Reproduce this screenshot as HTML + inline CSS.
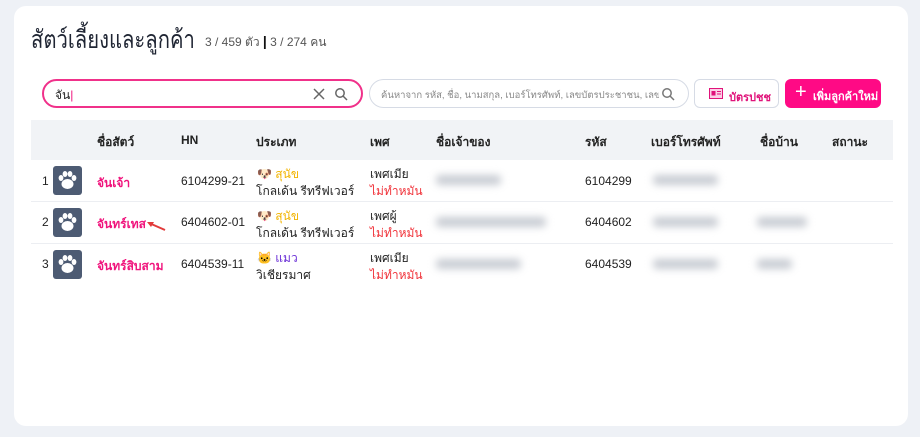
<!DOCTYPE html>
<html><head><meta charset="utf-8"><style>
*{box-sizing:border-box;margin:0;padding:0}
body{width:920px;height:437px;background:#eef1f6;font-family:"Liberation Sans","Noto Sans CJK SC",sans-serif;position:relative;overflow:hidden;color:#222}
.card{position:absolute;left:14px;top:6px;width:894px;height:420px;background:#fff;border-radius:12px}
.a{position:absolute;white-space:nowrap}
.title{left:31px;top:20px;font-size:25px;color:#1f2533;transform:scaleX(0.81);transform-origin:left top}
.sub{left:205px;top:33px;font-size:12px;color:#555}
.s1{left:42px;top:79px;width:321px;height:29px;border:2px solid #f0318a;border-radius:15px}
.s2{left:369px;top:79px;width:320px;height:29px;border:1px solid #d6dbe5;border-radius:15px;overflow:hidden}
.b1{left:694px;top:79px;width:85px;height:29px;border:1px solid #d6dbe5;border-radius:6px;color:#e0137a;font-size:11px;font-weight:bold}
.b2{left:785px;top:79px;width:96px;height:29px;background:#ff0a85;border-radius:6px;color:#fff;font-size:11px;font-weight:bold}
.th{left:31px;top:120px;width:862px;height:40px;background:#f1f3f6}
.h{top:133px;font-size:12px;font-weight:bold;color:#222}
.line{left:31px;width:862px;height:1px;background:#eceef2}
.av{left:53px;width:29px;height:29px;background:#4d5b73;border-radius:3px}
.t{font-size:12px}
.pink{color:#f0137c;font-weight:bold}
.red{color:#f0333a}
.blur{background:#c8ccd3;filter:blur(4px);height:10px;border-radius:4px}
</style></head><body>
<div class="card"></div>
<div class="a title">สัตว์เลี้ยงและลูกค้า</div>
<div class="a sub">3 / 459 ตัว <b style="color:#111;font-size:14px">|</b> 3 / 274 คน</div>
<div class="a s1"><span class="a t" style="left:11px;top:5px">จัน<span style="color:#f0137c">|</span></span>
<svg class="a" style="left:268px;top:6px" width="14" height="14" viewBox="0 0 14 14"><path d="M2 2L12 12M12 2L2 12" stroke="#666" stroke-width="1.5"/></svg>
<svg class="a" style="left:290px;top:6px" width="14" height="14" viewBox="0 0 14 14"><circle cx="6" cy="6" r="4.2" fill="none" stroke="#666" stroke-width="1.5"/><path d="M9 9L13 13" stroke="#666" stroke-width="1.5"/></svg></div>
<div class="a s2"><span class="a" style="left:11px;top:8px;font-size:9.5px;color:#888;width:278px;overflow:hidden">ค้นหาจาก รหัส, ชื่อ, นามสกุล, เบอร์โทรศัพท์, เลขบัตรประชาชน, เลข</span>
<svg class="a" style="left:291px;top:7px" width="14" height="14" viewBox="0 0 14 14"><circle cx="6" cy="6" r="4.2" fill="none" stroke="#777" stroke-width="1.5"/><path d="M9 9L13 13" stroke="#777" stroke-width="1.5"/></svg></div>
<div class="a b1"><svg class="a" style="left:14px;top:8px" width="14" height="11" viewBox="0 0 14 11"><rect x="0.5" y="0.5" width="13" height="10" fill="#fbd0e6" stroke="#e0137a"/><rect x="2.5" y="3" width="4" height="4.5" fill="#e0137a"/><path d="M8 3.5h4M8 6h4" stroke="#e0137a"/></svg><span class="a" style="left:34px;top:8px">บัตรปชช</span></div>
<div class="a b2"><span class="a" style="left:10px;top:2px;font-size:20px;font-weight:normal">+</span><span class="a" style="left:28px;top:8px">เพิ่มลูกค้าใหม่</span></div>
<div class="a th"></div>
<div class="a h" style="left:97px">ชื่อสัตว์</div><div class="a h" style="left:181px">HN</div><div class="a h" style="left:256px">ประเภท</div><div class="a h" style="left:370px">เพศ</div><div class="a h" style="left:436px">ชื่อเจ้าของ</div><div class="a h" style="left:585px">รหัส</div><div class="a h" style="left:651px">เบอร์โทรศัพท์</div><div class="a h" style="left:760px">ชื่อบ้าน</div><div class="a h" style="left:832px">สถานะ</div>
<div class="a line" style="top:201px"></div><div class="a line" style="top:243px"></div>

<div class="a t" style="left:42px;top:174px">1</div><div class="a av" style="top:166px"></div>
<div class="a t pink" style="left:97px;top:174px">จันเจ้า</div><div class="a t" style="left:181px;top:174px">6104299-21</div>
<div class="a t" style="left:257px;top:165px"><span>🐶</span> <span style="color:#f2b400">สุนัข</span></div><div class="a t" style="left:256px;top:182px">โกลเด้น รีทรีฟเวอร์</div>
<div class="a t" style="left:370px;top:165px">เพศเมีย</div><div class="a t red" style="left:370px;top:182px">ไม่ทำหมัน</div>
<div class="a t" style="left:585px;top:174px">6104299</div>

<div class="a t" style="left:42px;top:215px">2</div><div class="a av" style="top:208px"></div>
<div class="a t pink" style="left:97px;top:215px">จันทร์เทส</div>
<svg class="a" style="left:145px;top:220px" width="22" height="12" viewBox="0 0 22 12"><path d="M20 10L4 3" stroke="#e23b3b" stroke-width="2"/><path d="M2 2L9 2L6 7Z" fill="#e23b3b"/></svg>
<div class="a t" style="left:181px;top:215px">6404602-01</div>
<div class="a t" style="left:257px;top:207px"><span>🐶</span> <span style="color:#f2b400">สุนัข</span></div><div class="a t" style="left:256px;top:224px">โกลเด้น รีทรีฟเวอร์</div>
<div class="a t" style="left:370px;top:207px">เพศผู้</div><div class="a t red" style="left:370px;top:224px">ไม่ทำหมัน</div>
<div class="a t" style="left:585px;top:215px">6404602</div>

<div class="a t" style="left:42px;top:257px">3</div><div class="a av" style="top:250px"></div>
<div class="a t pink" style="left:97px;top:257px">จันทร์สิบสาม</div><div class="a t" style="left:181px;top:257px">6404539-11</div>
<div class="a t" style="left:257px;top:249px"><span>🐱</span> <span style="color:#6a2fd6">แมว</span></div><div class="a t" style="left:256px;top:266px">วิเชียรมาศ</div>
<div class="a t" style="left:370px;top:249px">เพศเมีย</div><div class="a t red" style="left:370px;top:266px">ไม่ทำหมัน</div>
<div class="a t" style="left:585px;top:257px">6404539</div>

<div class="a blur" style="left:436px;top:175px;width:65px"></div>
<div class="a blur" style="left:436px;top:217px;width:110px"></div>
<div class="a blur" style="left:436px;top:259px;width:85px"></div>
<div class="a blur" style="left:653px;top:175px;width:65px"></div>
<div class="a blur" style="left:653px;top:217px;width:65px"></div>
<div class="a blur" style="left:653px;top:259px;width:65px"></div>
<div class="a blur" style="left:757px;top:217px;width:50px"></div>
<div class="a blur" style="left:757px;top:259px;width:35px"></div>

<svg width="0" height="0" style="position:absolute"><defs><g id="paw"><ellipse cx="14.5" cy="18" rx="6" ry="5" fill="#fff"/><ellipse cx="8" cy="12" rx="2.4" ry="3" fill="#fff"/><ellipse cx="12" cy="8" rx="2.4" ry="3" fill="#fff"/><ellipse cx="17" cy="8" rx="2.4" ry="3" fill="#fff"/><ellipse cx="21" cy="12" rx="2.4" ry="3" fill="#fff"/></g></defs></svg>
<svg class="a" style="left:53px;top:166px" width="29" height="29"><use href="#paw"/></svg>
<svg class="a" style="left:53px;top:208px" width="29" height="29"><use href="#paw"/></svg>
<svg class="a" style="left:53px;top:250px" width="29" height="29"><use href="#paw"/></svg>
</body></html>
